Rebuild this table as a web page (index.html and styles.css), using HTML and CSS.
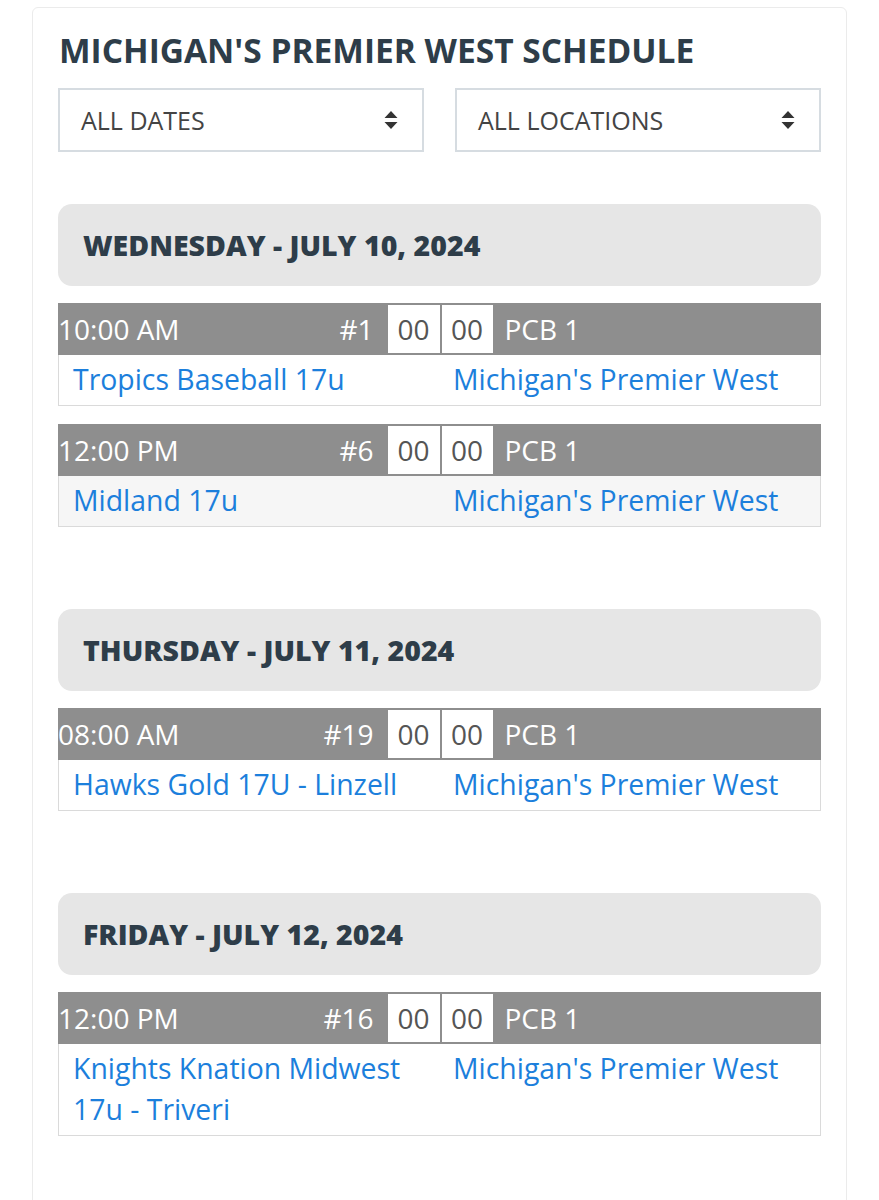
FILE: index.html
```html
<!DOCTYPE html>
<html lang="en">
<head>
<meta charset="utf-8">
<title>Michigan's Premier West Schedule</title>
<link rel="stylesheet" href="styles.css">
</head>
<body>
<div class="card">
  <h1 class="title">MICHIGAN'S PREMIER WEST SCHEDULE</h1>
  <div class="filters">
    <div class="select"><span>ALL DATES</span><svg class="sort" viewBox="0 0 14 20" width="14" height="20"><path d="M7 1 L13.5 8 H0.5 Z M7 19 L13.5 12 H0.5 Z" fill="#333"/></svg></div>
    <div class="select"><span>ALL LOCATIONS</span><svg class="sort" viewBox="0 0 14 20" width="14" height="20"><path d="M7 1 L13.5 8 H0.5 Z M7 19 L13.5 12 H0.5 Z" fill="#333"/></svg></div>
  </div>

  <section class="day">
    <h2 class="day-head">WEDNESDAY - JULY 10, 2024</h2>
    <div class="game">
      <div class="game-head">
        <div class="half left"><span class="time">10:00 AM</span><span class="num">#1</span><span class="score">00</span></div>
        <div class="half right"><span class="score">00</span><span class="loc">PCB 1</span></div>
      </div>
      <div class="game-body">
        <a class="team" href="#">Tropics Baseball 17u</a>
        <a class="team" href="#">Michigan's Premier West</a>
      </div>
    </div>
    <div class="game alt">
      <div class="game-head">
        <div class="half left"><span class="time">12:00 PM</span><span class="num">#6</span><span class="score">00</span></div>
        <div class="half right"><span class="score">00</span><span class="loc">PCB 1</span></div>
      </div>
      <div class="game-body">
        <a class="team" href="#">Midland 17u</a>
        <a class="team" href="#">Michigan's Premier West</a>
      </div>
    </div>
  </section>

  <section class="day">
    <h2 class="day-head">THURSDAY - JULY 11, 2024</h2>
    <div class="game">
      <div class="game-head">
        <div class="half left"><span class="time">08:00 AM</span><span class="num">#19</span><span class="score">00</span></div>
        <div class="half right"><span class="score">00</span><span class="loc">PCB 1</span></div>
      </div>
      <div class="game-body">
        <a class="team" href="#">Hawks Gold 17U - Linzell</a>
        <a class="team" href="#">Michigan's Premier West</a>
      </div>
    </div>
  </section>

  <section class="day">
    <h2 class="day-head">FRIDAY - JULY 12, 2024</h2>
    <div class="game">
      <div class="game-head">
        <div class="half left"><span class="time">12:00 PM</span><span class="num">#16</span><span class="score">00</span></div>
        <div class="half right"><span class="score">00</span><span class="loc">PCB 1</span></div>
      </div>
      <div class="game-body">
        <a class="team" href="#">Knights Knation Midwest 17u - Triveri</a>
        <a class="team" href="#">Michigan's Premier West</a>
      </div>
    </div>
  </section>
</div>
</body>
</html>
```

FILE: styles.css
```css
* { box-sizing: border-box; }

body {
  margin: 0;
  background: #fff;
  font-family: "Open Sans", "Noto Sans", sans-serif;
}

.card {
  margin: 7px 32px 0 32px;
  border: 1px solid #ebebeb;
  border-radius: 6px;
  padding: 24px 25px 90px 25px;
  min-height: 1300px;
}

.title {
  margin: 0 0 20px 1px;
  font-size: 33.5px;
  font-weight: 700;
  color: #2e3d49;
  line-height: 36px;
  letter-spacing: 0;
  white-space: nowrap;
}

.filters {
  display: grid;
  grid-template-columns: 1fr 1fr;
  gap: 31px;
  margin-bottom: 52px;
}

.select {
  height: 64px;
  border: 2px solid #d6dce1;
  display: flex;
  align-items: center;
  justify-content: space-between;
  padding: 0 24px 0 21px;
  font-size: 25px;
  color: #444;
}

.sort { display: block; }

.day { margin-bottom: 82px; }

.day-head {
  margin: 0 0 17px 0;
  background: #e6e6e6;
  border-radius: 14px;
  height: 82px;
  display: flex;
  align-items: center;
  padding-left: 25px;
  font-size: 28.5px;
  font-weight: 800;
  color: #2e3d49;
}

.game { margin-bottom: 18px; }

.game-head {
  display: flex;
  height: 52px;
  background: #8e8e8e;
  color: #fff;
  font-size: 28px;
}

.half {
  flex: 1 1 0;
  display: flex;
  align-items: stretch;
}

.time {
  flex: 1;
  display: flex;
  align-items: center;
  padding-left: 0;
}

.num {
  display: flex;
  align-items: center;
  padding-right: 14px;
}

.score {
  width: 52px;
  margin: 2px 0;
  background: #fff;
  color: #555;
  display: flex;
  align-items: center;
  justify-content: center;
}

.right .score { margin-left: 2px; width: 51px; }

.loc {
  display: flex;
  align-items: center;
  padding-left: 12px;
}

.game-body {
  display: flex;
  border: 1px solid #dadada;
  border-top: none;
  background: #fff;
  padding: 4px 0 5px;
}

.game.alt .game-body { background: #f6f6f6; }

.team {
  flex: 1 1 0;
  font-size: 28.4px;
  line-height: 41px;
  color: #1c7fdc;
  text-decoration: none;
  padding: 0 20px 0 14px;
}

.team + .team { padding-left: 13px; }
```
